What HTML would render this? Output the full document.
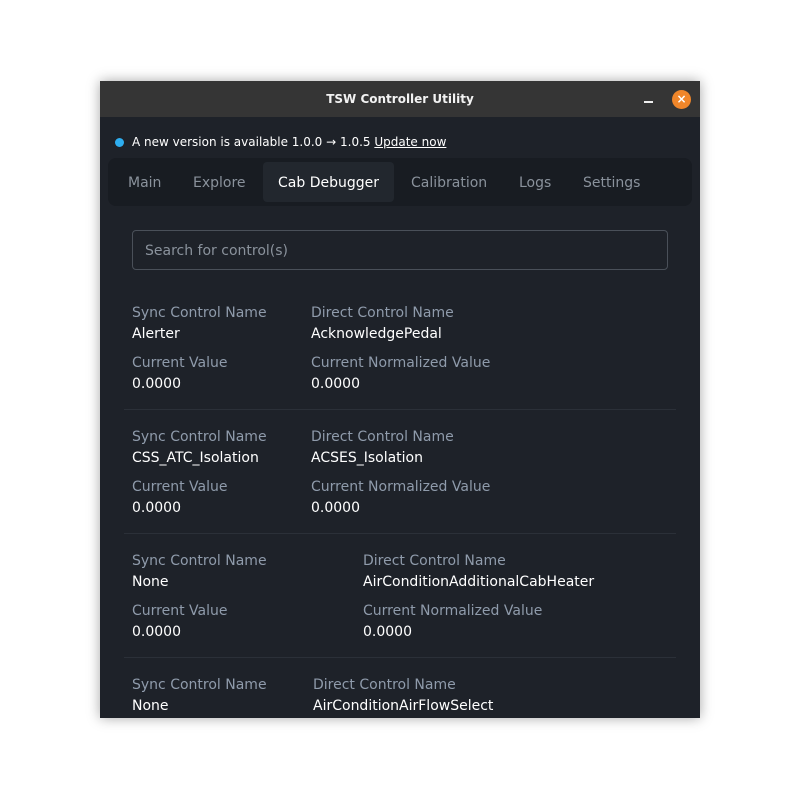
<!DOCTYPE html>
<html><head><meta charset="utf-8"><style>
*{margin:0;padding:0;box-sizing:border-box}
body{width:800px;height:800px;background:#fff;position:relative;overflow:hidden;font-family:"DejaVu Sans","Liberation Sans",sans-serif}
.win{position:absolute;left:100px;top:81px;width:600px;height:637px;background:#1e2229;box-shadow:0 0 12px rgba(0,0,0,.35);overflow:hidden}
.tb{position:absolute;left:0;top:0;width:600px;height:36px;background:#353535;color:#f2f2f2;font:bold 12px "DejaVu Sans",sans-serif;text-align:center;line-height:37px}
.min{position:absolute;left:544px;top:20px;width:9px;height:2px;background:#eee}
.cls{position:absolute;left:572px;top:9px;width:19px;height:19px;border-radius:50%;background:#f0862a;color:#fff;font:bold 12px "DejaVu Sans",sans-serif;line-height:19px;text-align:center}
.t{position:absolute;white-space:nowrap;font-size:14px;line-height:18px}
.l{color:#8f9bab}
.v{color:#fff}
.tabs{position:absolute;left:8px;top:77px;width:584px;height:48px;background:#181c22;border-radius:8px}
.act{position:absolute;left:155px;top:4px;width:131px;height:40px;background:#22272e;border-radius:4px}
.tab{position:absolute;top:16px;font-size:14px;line-height:18px;color:#8a929c}
.srch{position:absolute;left:32px;top:149px;width:536px;height:40px;border:1px solid #4a5059;border-radius:4px;color:#8a929c;font-size:14px;line-height:40px;padding-left:12px}
.div{position:absolute;left:24px;width:552px;height:1px;background:#2b3038}
</style></head><body>
<div class="win">
<div class="tb">TSW Controller Utility</div>
<div class="min"></div><div class="cls">×</div>
<div style="position:absolute;left:15px;top:57px;width:9px;height:9px;border-radius:50%;background:#2eaef0"></div>
<div class="t v" style="left:32px;top:52px;font-size:12px">A new version is available 1.0.0 → 1.0.5 <u>Update now</u></div>
<div class="tabs"><div class="act"></div>
<span class="tab" style="left:20px">Main</span>
<span class="tab" style="left:85px">Explore</span>
<span class="tab" style="left:170px;color:#fff">Cab Debugger</span>
<span class="tab" style="left:303px">Calibration</span>
<span class="tab" style="left:411px">Logs</span>
<span class="tab" style="left:475px">Settings</span>
</div>
<div class="srch">Search for control(s)</div>

<div class="t l" style="left:32px;top:223px">Sync Control Name</div>
<div class="t l" style="left:211px;top:223px">Direct Control Name</div>
<div class="t v" style="left:32px;top:244px">Alerter</div>
<div class="t v" style="left:211px;top:244px">AcknowledgePedal</div>
<div class="t l" style="left:32px;top:273px">Current Value</div>
<div class="t l" style="left:211px;top:273px">Current Normalized Value</div>
<div class="t v" style="left:32px;top:294px">0.0000</div>
<div class="t v" style="left:211px;top:294px">0.0000</div>
<div class="div" style="top:328px"></div>

<div class="t l" style="left:32px;top:347px">Sync Control Name</div>
<div class="t l" style="left:211px;top:347px">Direct Control Name</div>
<div class="t v" style="left:32px;top:368px">CSS_ATC_Isolation</div>
<div class="t v" style="left:211px;top:368px">ACSES_Isolation</div>
<div class="t l" style="left:32px;top:397px">Current Value</div>
<div class="t l" style="left:211px;top:397px">Current Normalized Value</div>
<div class="t v" style="left:32px;top:418px">0.0000</div>
<div class="t v" style="left:211px;top:418px">0.0000</div>
<div class="div" style="top:452px"></div>

<div class="t l" style="left:32px;top:471px">Sync Control Name</div>
<div class="t l" style="left:263px;top:471px">Direct Control Name</div>
<div class="t v" style="left:32px;top:492px">None</div>
<div class="t v" style="left:263px;top:492px">AirConditionAdditionalCabHeater</div>
<div class="t l" style="left:32px;top:521px">Current Value</div>
<div class="t l" style="left:263px;top:521px">Current Normalized Value</div>
<div class="t v" style="left:32px;top:542px">0.0000</div>
<div class="t v" style="left:263px;top:542px">0.0000</div>
<div class="div" style="top:576px"></div>

<div class="t l" style="left:32px;top:595px">Sync Control Name</div>
<div class="t l" style="left:213px;top:595px">Direct Control Name</div>
<div class="t v" style="left:32px;top:616px">None</div>
<div class="t v" style="left:213px;top:616px">AirConditionAirFlowSelect</div>
</div>
</body></html>
